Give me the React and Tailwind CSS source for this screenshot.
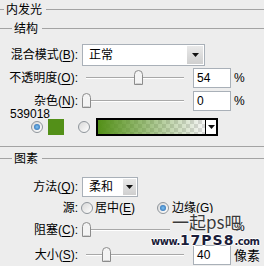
// inner glow panel
const LINE = "bg-[#a3a3a3]";

function Header({ title, lead }) {
  return (
    <div className="flex items-center h-[19px]">
      <div className={`${lead} h-px ${LINE}`} />
      <span className="ml-[2px] mr-[4px] leading-none">{title}</span>
      <div className={`flex-1 h-px ${LINE}`} />
    </div>
  );
}

function Label({ children }) {
  return <div className="w-[78px] shrink-0 text-right leading-none">{children}</div>;
}

function U({ children }) {
  return <span className="underline underline-offset-[2px]">{children}</span>;
}

function Thumb() {
  return (
    <svg width="9" height="15" viewBox="0 0 9 15">
      <path
        d="M0.5 4.5 Q0.5 0.5 4.5 0.5 Q8.5 0.5 8.5 4.5 L8.5 14.5 L0.5 14.5 Z"
        fill="#f4f4f4"
        stroke="#8c8c8c"
      />
      <path d="M1.5 13.5 L7.5 13.5" stroke="#d0d0d0" />
    </svg>
  );
}

function Slider({ pos }) {
  return (
    <div className="relative ml-[4px] w-[106px] h-[16px] shrink-0">
      <div className="absolute left-[4px] right-[4px] top-[7px] h-[2px] border-t border-[#a8a8a8] border-b border-b-white" />
      <div className={`absolute top-0 ${pos}`}>
        <Thumb />
      </div>
    </div>
  );
}

function Field({ value }) {
  return (
    <div className="ml-[5px] w-[38px] h-[20px] shrink-0 bg-white border border-[#a9b0b8] pl-[3px] flex items-center leading-none">
      {value}
    </div>
  );
}

function Arrow() {
  return (
    <svg width="7" height="4" viewBox="0 0 7 4">
      <path d="M0 0 L7 0 L3.5 4 Z" fill="#111" />
    </svg>
  );
}

function Radio({ on }) {
  return (
    <div className="w-[12px] h-[12px] shrink-0 rounded-full border border-[#8f959b] bg-linear-to-br from-[#d8d8d8] to-white flex items-center justify-center">
      {on && (
        <div className="w-[6px] h-[6px] rounded-full bg-radial from-[#7fc3f2] to-[#1f5fa8]" />
      )}
    </div>
  );
}

export default function App() {
  return (
    <div className="relative w-[264px] h-[266px] overflow-hidden bg-[#ededed] text-black text-[12px] font-['Liberation_Sans','Noto_Sans_CJK_SC',sans-serif]">
      <Header title="内发光" lead="w-[4px]" />
      <Header title="结构" lead="w-[12px]" />

      <div className="mt-[6px] flex items-center h-[22px]">
        <Label>
          混合模式(<U>B</U>):
        </Label>
        <div className="ml-[4px] w-[123px] h-[22px] bg-white border border-[#a9b0b8] flex items-center">
          <span className="flex-1 pl-[6px] leading-none">正常</span>
          <div className="w-[16px] h-[18px] mr-[1px] bg-linear-to-b from-[#e9e9e9] to-[#cfcfcf] flex items-center justify-center">
            <Arrow />
          </div>
        </div>
      </div>

      <div className="mt-[2px] flex items-center h-[20px]">
        <Label>
          不透明度(<U>O</U>):
        </Label>
        <Slider pos="left-[52px]" />
        <Field value="54" />
        <span className="ml-[3px] leading-none">%</span>
      </div>

      <div className="mt-[3px] flex items-center h-[20px]">
        <Label>
          杂色(<U>N</U>):
        </Label>
        <Slider pos="left-0" />
        <Field value="0" />
        <span className="ml-[3px] leading-none">%</span>
      </div>

      <div className="h-[7px] pl-[10px] leading-[6px]">539018</div>

      <div className="flex items-center h-[18px]">
        <div className="ml-[31px]">
          <Radio on />
        </div>
        <div className="ml-[5px] w-[16px] h-[16px] bg-[#539018]" />
        <div className="ml-[14px]">
          <Radio />
        </div>
        <div className="ml-[6px] w-[122px] h-[18px] border-2 border-black flex">
          <div className="flex-1 bg-[conic-gradient(#d9d9d9_25%,#f7f7f7_0_50%,#d9d9d9_0_75%,#f7f7f7_0)] bg-[length:8px_8px]">
            <div className="h-full bg-linear-to-r from-[#539018] to-[#53901800]" />
          </div>
          <div className="w-[11px] border-l border-black bg-white flex items-center justify-center">
            <Arrow />
          </div>
        </div>
      </div>

      <div className={`mt-[10px] h-px ${LINE}`} />
      <div className="h-[1px]" />
      <div className="flex items-center h-[21px]">
        <div className={`w-[12px] h-px ${LINE}`} />
        <span className="ml-[2px] mr-[4px] leading-none">图素</span>
        <div className={`flex-1 h-px ${LINE}`} />
      </div>

      <div className="mt-[8px] flex items-center h-[20px]">
        <Label>
          方法(<U>Q</U>):
        </Label>
        <div className="ml-[4px] w-[56px] h-[20px] bg-white border border-[#a9b0b8] flex items-center">
          <span className="flex-1 pl-[6px] leading-none">柔和</span>
          <div className="w-[13px] h-[16px] mr-[1px] bg-linear-to-b from-[#e9e9e9] to-[#cfcfcf] flex items-center justify-center">
            <Arrow />
          </div>
        </div>
      </div>

      <div className="mt-[2px] flex items-center h-[18px]">
        <Label>源:</Label>
        <div className="ml-[3px]">
          <Radio />
        </div>
        <span className="ml-[2px] leading-none">
          居中(<U>E</U>)
        </span>
        <div className="ml-[22px]">
          <Radio on />
        </div>
        <span className="ml-[3px] leading-none">
          边缘(<U>G</U>)
        </span>
      </div>

      <div className="mt-[3px] flex items-center h-[20px]">
        <Label>
          阻塞(<U>C</U>):
        </Label>
        <Slider pos="left-0" />
        {/* field hidden under the watermark */}
        <div className="ml-[5px] w-[38px] shrink-0" />
        <span className="ml-[3px] -mt-[6px] leading-none">%</span>
      </div>

      <div className="mt-[5px] flex items-center h-[20px]">
        <Label>
          大小(<U>S</U>):
        </Label>
        <Slider pos="left-[20px]" />
        <Field value="40" />
        <span className="ml-[3px] text-[13px] leading-none">像素</span>
      </div>

      {/* watermark */}
      <div className="absolute left-[170px] top-[213px] w-[61px] h-[32px] bg-[#ededed]" />
      <div className="absolute left-[172px] top-[213px] text-[17px] leading-none text-[#3a3a3a] font-['Noto_Sans_CJK_SC',sans-serif] [text-shadow:0_0_2px_#fff]">
        一起ps吧
      </div>
      <div className="absolute left-[151px] top-[233px] flex items-end leading-none font-['DejaVu_Sans',sans-serif] font-black text-[#1b1d3a] [text-shadow:1px_0_0_#fff,-1px_0_0_#fff,0_1px_0_#fff,0_-1px_0_#fff]">
        <span className="text-[10px] tracking-[-0.5px]">www.</span>
        <span className="text-[14px] tracking-[1px]">17PS8</span>
        <span className="text-[10px] tracking-[-0.5px]">.com</span>
      </div>
    </div>
  );
}
